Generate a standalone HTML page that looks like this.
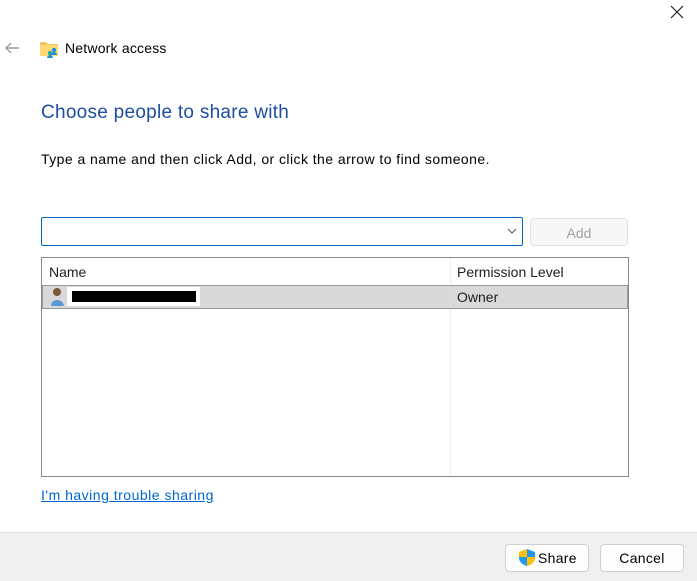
<!DOCTYPE html>
<html><head><style>
body{margin:0;width:697px;height:580px;background:#fff;font-family:"Segoe UI","Liberation Sans",sans-serif;position:relative;overflow:hidden;color:#000}
.a{position:absolute}
</style></head><body>
<svg class="a" style="left:670px;top:5px" width="14" height="14"><path d="M1 1L13 13M13 1L1 13" stroke="#222" stroke-width="1.2"/></svg>
<svg class="a" style="left:4px;top:41px" width="16" height="14"><path d="M15 7H2M7 2L2 7L7 12" stroke="#9a9a9a" stroke-width="1.4" fill="none"/></svg>
<svg class="a" style="left:40px;top:40px" width="19" height="18"><path d="M0 2h6l2 2h10v12H0z" fill="#f2c55c"/><path d="M0 5h18v11H0z" fill="#ffd976"/><circle cx="14" cy="10" r="2.2" fill="#1a8fd8"/><circle cx="10" cy="13" r="2.2" fill="#26a69a"/><path d="M7 18a3 3 0 016 0zM11 15a3 3 0 016 0z" fill="#1a8fd8"/></svg>
<div class="a" style="left:65px;top:40px;font-size:14px;letter-spacing:0.2px">Network access</div>
<div class="a" style="left:41px;top:102px;font-size:19px;color:#1c4fa0;letter-spacing:0.27px">Choose people to share with</div>
<div class="a" style="left:41px;top:151px;font-size:14px;letter-spacing:0.44px">Type a name and then click Add, or click the arrow to find someone.</div>
<div class="a" style="left:41px;top:217px;width:480px;height:27px;border:1px solid #0067c0;border-radius:2px"></div>
<svg class="a" style="left:507px;top:228px" width="10" height="6"><path d="M1 1L5 5L9 1" stroke="#555" fill="none"/></svg>
<div class="a" style="left:530px;top:218px;width:96px;height:26px;border:1px solid #e3e3e3;border-radius:4px;background:#f7f7f7;color:#a0a0a0;font-size:14px;text-align:center;line-height:28px">Add</div>
<div class="a" style="left:41px;top:257px;width:586px;height:218px;border:1px solid #8a8a8a"></div>
<div class="a" style="left:450px;top:258px;width:1px;height:218px;background:#e6eef8"></div>
<div class="a" style="left:49px;top:264px;font-size:14px;color:#1e1e1e">Name</div>
<div class="a" style="left:457px;top:264px;font-size:14px;color:#1e1e1e">Permission Level</div>
<div class="a" style="left:42px;top:285px;width:584px;height:22px;background:#d9d9d9;border:1px solid #999"></div>
<div class="a" style="left:450px;top:286px;width:1px;height:22px;background:#ddd"></div>
<svg class="a" style="left:50px;top:287px" width="16" height="20"><circle cx="7" cy="5" r="4" fill="#7a5a3a"/><path d="M1 19c0-8 12-8 13 0z" fill="#5b9bd5"/></svg>
<div class="a" style="left:67px;top:287px;width:133px;height:19px;background:#fff"></div>
<div class="a" style="left:72px;top:291px;width:124px;height:11px;background:#000"></div>
<div class="a" style="left:457px;top:289px;font-size:14px;color:#1e1e1e">Owner</div>
<div class="a" style="left:41px;top:487px;font-size:14px;color:#0066cc;text-decoration:underline;letter-spacing:0.5px">I'm having trouble sharing</div>
<div class="a" style="left:0;top:532px;width:697px;height:48px;background:#f0f0f0;border-top:1px solid #e0e0e0"></div>
<div class="a" style="left:505px;top:544px;width:82px;height:26px;border:1px solid #d0d0d0;border-radius:4px;background:#fdfdfd"></div>
<svg class="a" style="left:518px;top:548px" width="18" height="19"><path d="M9 1L1 4v6c0 4 4 7 8 8 4-1 8-4 8-8V4z" fill="#2196f3"/><path d="M9 1v8H1V4zM9 9h8v1c0 4-4 7-8 8z" fill="#ffc107"/></svg>
<div class="a" style="left:538px;top:550px;font-size:14px;letter-spacing:0.3px">Share</div>
<div class="a" style="left:600px;top:544px;width:82px;height:26px;border:1px solid #d0d0d0;border-radius:4px;background:#fdfdfd;font-size:14px;text-align:center;line-height:27px;letter-spacing:0.3px">Cancel</div>
</body></html>
